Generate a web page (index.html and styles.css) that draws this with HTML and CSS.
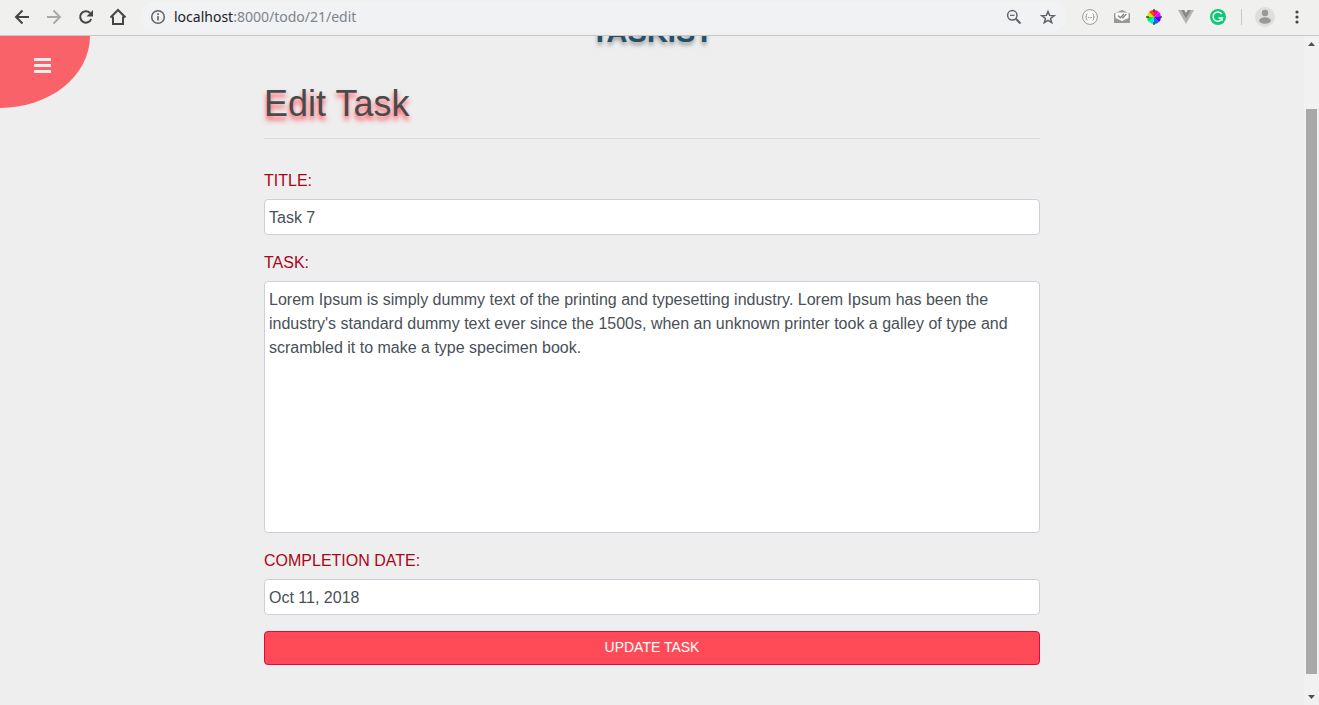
FILE: index.html
```html
<!DOCTYPE html>
<html lang="en">
<head>
<meta charset="utf-8">
<title>Taskist - Edit Task</title>
<link rel="stylesheet" href="styles.css">
</head>
<body>
<header class="toolbar">
  <nav class="nav-buttons" aria-label="Browser navigation">
    <button class="icon-button" type="button" aria-label="Back"><svg width="16" height="16" viewBox="0 0 16 16" fill="none" stroke="#454545" stroke-width="2"><path d="M15 8H2M8.500 1.500 2 8l6.500 6.500"/></svg></button>
    <button class="icon-button" type="button" aria-label="Forward"><svg width="16" height="16" viewBox="0 0 16 16" fill="none" stroke="#a9a9a8" stroke-width="2"><path d="M1 8h13M7.500 1.500 14 8l-6.500 6.500"/></svg></button>
    <button class="icon-button" type="button" aria-label="Reload"><svg width="16" height="16" viewBox="0 0 16 16"><path d="M13.200 10A5.700 5.700 0 1 1 12 4" fill="none" stroke="#454545" stroke-width="2"/><path d="M15 1v6.500H8.500z" fill="#454545"/></svg></button>
    <button class="icon-button" type="button" aria-label="Home"><svg width="18" height="18" viewBox="0 0 18 18" fill="none" stroke="#454545" stroke-width="2"><path d="M1.500 9.500 9 2l7.500 7.500M4 8.500V16h10V8.500" stroke-linejoin="miter"/></svg></button>
  </nav>
  <div class="address">
    <svg width="16" height="16" viewBox="0 0 16 16"><circle cx="8" cy="8" r="6.300" fill="none" stroke="#5f6368" stroke-width="1.500"/><path d="M7.200 7h1.600v4.500H7.200zM7.200 4.300h1.600v1.600H7.200z" fill="#5f6368"/></svg>
    <span class="url"><b class="host">localhost</b>:8000/todo/21/edit</span>
    <button class="icon-button" type="button" aria-label="Zoom"><svg width="16" height="16" viewBox="0 0 16 16" fill="none" stroke="#5f6368"><circle cx="6.300" cy="6.300" r="4.700" stroke-width="1.500"/><path d="M4 6.300h4.600" stroke-width="1.200"/><path d="m9.800 9.800 4.700 4.700" stroke-width="2"/></svg></button>
    <button class="icon-button" type="button" aria-label="Bookmark"><svg width="16" height="16" viewBox="0 0 16 16" fill="none" stroke="#5f6368" stroke-width="1.500"><path d="m8 2.500 1.600 3.900 4.500.3-3.500 2.800 1.100 4.200L8 11.400l-3.700 2.300 1.100-4.200-3.500-2.800 4.500-.3z"/></svg></button>
  </div>
  <div class="extensions">
    <button class="icon-button" type="button" aria-label="JSON viewer"><svg width="16" height="16" viewBox="0 0 16 16" fill="none" stroke="#999"><circle cx="8" cy="8" r="7.400" fill="#f8f8f8"/><path d="M5.500 4.800c-1.500 0-1 1.200-1 2S4.300 8 3.500 8c.8 0 1 .4 1 1.200s-.5 2 1 2M10.500 4.800c1.500 0 1 1.200 1 2s.2 1.200 1 1.200c-.8 0-1 .4-1 1.200s.5 2-1 2"/><path d="M6 8.500h4" stroke-dasharray="1 .5"/></svg></button>
    <button class="icon-button" type="button" aria-label="Mail tracker"><svg width="16" height="16" viewBox="0 0 16 16"><path d="M0 4.500 8 1l8 3.500V14H0z" fill="#999"/><path d="M1.500 3.500h13v5.500L8 12 1.500 9z" fill="#fff"/><path d="m4 6.500 2.300 2.300L10 5M8 8.300l.7.500L12.500 5" fill="none" stroke="#888" stroke-width="1.300"/></svg></button>
    <button class="icon-button" type="button" aria-label="Colour picker"><svg width="16" height="16" viewBox="0 0 16 16"><path d="M8 8V1a7 7 0 0 1 5 2z" fill="#f08"/><path d="m8 8 5-5a7 7 0 0 1 2 5z" fill="#e0f"/><path d="M8 8h7a7 7 0 0 1-2 5z" fill="#40f"/><path d="m8 8 5 5a7 7 0 0 1-5 2z" fill="#06f"/><path d="M8 8v7a7 7 0 0 1-5-2z" fill="#0ee"/><path d="m8 8-5 5a7 7 0 0 1-2-5z" fill="#0e4"/><path d="M8 8H1a7 7 0 0 1 2-5z" fill="#ce0"/><path d="M8 8 3 3a7 7 0 0 1 5-2z" fill="#f40"/><path d="M8 0v3M8 13v3M0 8h3M13 8h3" stroke="#444" stroke-width="1.500"/></svg></button>
    <button class="icon-button" type="button" aria-label="Vue devtools"><svg width="16" height="16" viewBox="0 0 16 16"><path d="M0 1h16L8 15z" fill="#b3b3b3"/><path d="M3.200 1h9.600L8 9.500z" fill="#888"/><path d="M6.200 1h3.600L8 4z" fill="#f0f0ee"/></svg></button>
    <button class="icon-button" type="button" aria-label="Grammar checker"><svg width="16" height="16" viewBox="0 0 16 16"><circle cx="8" cy="8" r="8" fill="#0cc978"/><path d="M11.700 5A4.700 4.700 0 1 0 12.300 9H8.500M12.200 8.500v3.300" fill="none" stroke="#fff" stroke-width="1.500"/></svg></button>
    <span class="divider"></span>
    <button class="icon-button" type="button" aria-label="Profile"><svg width="20" height="20" viewBox="0 0 20 20"><circle cx="10" cy="10" r="10" fill="#dedede"/><circle cx="10" cy="6" r="3.200" fill="#999"/><ellipse cx="10" cy="13.500" rx="5.800" ry="3.300" fill="#999"/></svg></button>
    <button class="icon-button" type="button" aria-label="Menu"><svg width="16" height="16" viewBox="0 0 16 16" fill="#454545"><circle cx="8" cy="3" r="1.600"/><circle cx="8" cy="8" r="1.600"/><circle cx="8" cy="13" r="1.600"/></svg></button>
  </div>
</header>
<div class="window">
  <div class="page">
    <button class="menu-toggle" type="button" aria-label="Open menu"><svg width="17" height="15" viewBox="0 0 17 15" fill="#eee"><rect width="17" height="3" rx=".5"/><rect y="6" width="17" height="3" rx=".5"/><rect y="12" width="17" height="3" rx=".5"/></svg></button>
    <div class="brand">TASKIST</div>
    <main class="content">
      <h1 class="heading">Edit Task</h1>
      <form class="form">
        <div class="field">
          <label class="label" for="title">TITLE:</label>
          <input class="control" id="title" type="text" value="Task 7">
        </div>
        <div class="field">
          <label class="label" for="task">TASK:</label>
          <textarea class="control" id="task" rows="10">Lorem Ipsum is simply dummy text of the printing and typesetting industry. Lorem Ipsum has been the industry's standard dummy text ever since the 1500s, when an unknown printer took a galley of type and scrambled it to make a type specimen book.</textarea>
        </div>
        <div class="field">
          <label class="label" for="date">COMPLETION DATE:</label>
          <input class="control" id="date" type="text" value="Oct 11, 2018">
        </div>
        <button class="submit" type="submit">UPDATE TASK</button>
      </form>
    </main>
  </div>
  <div class="scrollbar" aria-hidden="true">
    <svg class="arrow" width="7" height="4" viewBox="0 0 7 4"><path d="M0 4 3.500 0 7 4z" fill="#505050"/></svg>
    <div class="track"><div class="thumb"></div></div>
    <svg class="arrow" width="7" height="4" viewBox="0 0 7 4"><path d="M0 0h7L3.500 4z" fill="#505050"/></svg>
  </div>
</div>
</body>
</html>
```
FILE: styles.css
```css
* {
  box-sizing: border-box;
}

body {
  margin: 0;
  height: 100vh;
  display: flex;
  flex-direction: column;
  overflow: hidden;
  background: #eee;
  font-family: "Liberation Sans", Arial, sans-serif;
  font-size: 16px;
  line-height: 24px;
}

button {
  font-family: inherit;
  cursor: pointer;
}

/* Browser toolbar */
.toolbar {
  display: flex;
  align-items: center;
  flex-shrink: 0;
  height: 36px;
  padding: 0 12px 2px;
  background: #f0f0ee;
  border-bottom: 1px solid #c8c8c6;
}

.nav-buttons,
.extensions {
  display: flex;
  align-items: center;
  gap: 12px;
}

.icon-button {
  display: flex;
  align-items: center;
  justify-content: center;
  width: 20px;
  height: 32px;
  padding: 0;
  border: 0;
  background: none;
}

.address {
  display: flex;
  flex: 1;
  align-items: center;
  gap: 8px;
  height: 30px;
  margin: 0 14px 0 12px;
  padding: 0 8px 0 10px;
  border-radius: 15px;
  background: #f0f2f4;
}

.address .icon-button + .icon-button {
  margin-left: 6px;
}

.url {
  flex: 1;
  color: #80848a;
  font-family: "Noto Sans", sans-serif;
  font-size: 14px;
}

.host {
  color: #202124;
  font-weight: normal;
}

.divider {
  width: 1px;
  height: 16px;
  margin: 0 1px;
  background: #c8c8c6;
}

/* Scrolled page area */
.window {
  display: flex;
  flex: 1;
  min-height: 0;
}

.page {
  position: relative;
  flex: 1;
  overflow: hidden;
}

.menu-toggle {
  position: absolute;
  top: 0;
  left: 0;
  width: 90px;
  height: 72px;
  padding: 0 5px 14px 0;
  border: 0;
  border-radius: 0 0 100% 0;
  background: #f96268;
}

.menu-toggle svg {
  display: block;
  margin: 0 auto;
}

.brand {
  margin-top: -20px;
  color: #23506b;
  font-size: 29px;
  font-weight: bold;
  line-height: 32px;
  text-align: center;
  text-shadow: 0 3px 4px #999;
}

.content {
  max-width: 776px;
  margin: 0 auto;
  padding-top: 34px;
}

.heading {
  margin: 0 0 30px;
  padding-bottom: 13px;
  border-bottom: 1px solid #dadada;
  color: #4a4a4a;
  font-size: 36px;
  font-weight: normal;
  line-height: 43px;
  text-shadow: 0 4px 5px #ff4b57;
}

.form {
  display: flex;
  flex-direction: column;
  gap: 16px;
}

.field {
  display: flex;
  flex-direction: column;
  gap: 6px;
}

.label {
  color: #a90519;
}

.control {
  width: 100%;
  padding: 6px 4px 4px;
  border: 1px solid #cdd0dc;
  border-radius: 4px;
  background: #fff;
  color: #495057;
  font: inherit;
  resize: none;
  outline: none;
}

.submit {
  height: 34px;
  padding: 0 6px 2px;
  border: 1px solid #dc0c40;
  border-radius: 4px;
  background: #ff4b57;
  color: #fff;
  font-size: 14px;
}

/* Scrollbar */
.scrollbar {
  display: flex;
  flex-direction: column;
  align-items: center;
  width: 15px;
  padding: 6px 0;
  background: #f1f1f1;
}

.arrow {
  flex-shrink: 0;
}

.track {
  flex: 1;
  display: flex;
  flex-direction: column;
  justify-content: flex-end;
  width: 11px;
  padding: 0 0 21px;
}

.thumb {
  height: 90%;
  background: #a8a8a8;
}
```
